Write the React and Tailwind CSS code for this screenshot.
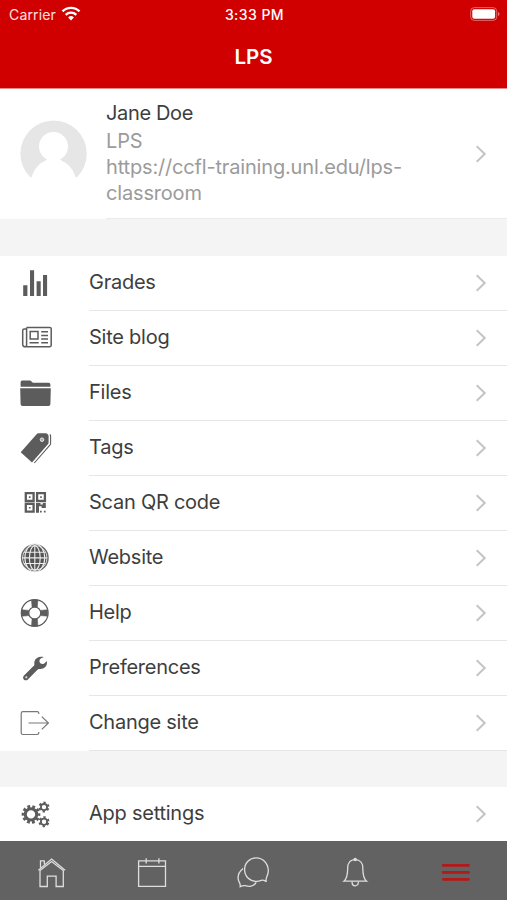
const ICON = "size-10 shrink-0";

function GradesIcon() {
  return (
    <svg viewBox="0 0 40 40" className={ICON} fill="currentColor">
      <path d="M8.2 22.3h4.2V33H8.2zM15 7.3h4.1V33H15zM21.6 18.3h4.1V33h-4.1zM28 12h4.1v21H28z" />
    </svg>
  );
}

function BlogIcon() {
  return (
    <svg viewBox="0 0 40 40" className={ICON} fill="none" stroke="currentColor" strokeWidth="1.5">
      <path d="M11.6 9.4h23.2a1.4 1.4 0 0 1 1.4 1.4v16.4a1.6 1.6 0 0 1-1.6 1.6H10a2.3 2.3 0 0 1-2.3-2.3v-14a1.6 1.6 0 0 1 1.6-1.6h2.2M11.6 9.4v17.3a1.6 1.6 0 0 1-2 1.9" />
      <path d="M15.2 13.6h7.8v7.4h-7.8zM26.2 13.8H33M26.2 17.4H33M26.2 21.1H33M26.2 24.8H33M14.5 24.8h9.2" />
    </svg>
  );
}

function FilesIcon() {
  return (
    <svg viewBox="0 0 40 40" className={ICON} fill="currentColor">
      <path d="M5.6 13.8V9.2q0-1.6 1.6-1.6h7.6c1.8 0 1.6 2.2 3.4 2.2h15.4q1.8 0 1.8 1.8v2.2z" />
      <path d="M5.2 15.2h30.6l-.4 15.8q0 1.9-1.9 1.9h-26q-1.9 0-1.9-1.9z" />
    </svg>
  );
}

function TagsIcon() {
  return (
    <svg viewBox="0 0 40 40" className={ICON} fill="currentColor">
      <path d="M5.7 24.2 21.6 6.2q.8-.9 2-.9h7.2q1.1 0 1.7.8l.7.9q.4.6.4 1.3v6.2q0 .8-.5 1.400L17 34.600z" />
      <path d="M34.800 6.500q.8.500.8 1.500v7.600q0 .7-.5 1.300L19.300 35" fill="none" stroke="currentColor" strokeWidth="1.1" />
      <circle cx="27" cy="11.7" r="1.8" fill="#aaa" stroke="#eee" strokeWidth=".9" />
    </svg>
  );
}

function QrIcon() {
  return (
    <svg viewBox="0 0 40 40" className={ICON} fill="currentColor">
      <path
        d="M10.8 10.2h7.8V18h-7.8zM22.1 10.2h7.8V18h-7.8zM10.8 20.8h7.8v7.8h-7.8z"
        fill="none"
        stroke="currentColor"
        strokeWidth="2.3"
      />
      <path d="M13.900 13.300h1.600v1.600h-1.600zM25.200 13.300h1.600v1.600h-1.600zM13.900 23.900h1.600v1.600h-1.600z" />
      <path d="M21 19.9h4.500v1.500h2.300v-1.500h3v5h-4.200v-1.600h-2.600v6.400h-3zM25 27.800h1.700v1.700H25zM28.900 27.800h1.700v1.700h-1.700z" />
    </svg>
  );
}

function GlobeIcon() {
  return (
    <svg viewBox="0 0 40 40" className={ICON} fill="none">
      <circle cx="19.8" cy="19.9" r="13.2" stroke="#686868" strokeWidth="1.5" />
      <circle cx="19.8" cy="19.9" r="11.800" fill="#555" />
      <g stroke="#ededed" strokeWidth="1.1">
        <path d="M19.8 7.500v24.800M7.400 19.900h24.800M9 14.300h21.600M9 25.500h21.600" />
        <ellipse cx="19.8" cy="19.9" rx="5.4" ry="12.2" />
        <ellipse cx="19.8" cy="19.9" rx="9.9" ry="14" />
      </g>
    </svg>
  );
}

function HelpIcon() {
  return (
    <svg viewBox="0 0 40 40" className={ICON} fill="none" stroke="#5c5c5c">
      <path
        d="M16.500 7h6.400l-.6 7.200h-5.200zM16.500 33h6.400l-.6-7.200h-5.200zM6.700 16.800v6.400l7.200-.6v-5.200zM32.700 16.800v6.400l-7.200-.6v-5.200z"
        fill="#5c5c5c"
        strokeWidth=".6"
      />
      <circle cx="19.7" cy="20" r="13.4" strokeWidth="1.2" />
      <circle cx="19.7" cy="20" r="6" strokeWidth="1.1" />
    </svg>
  );
}

function WrenchIcon() {
  return (
    <svg viewBox="0 0 40 40" className={ICON}>
      <path
        d="M28.8 9.1c-3.6-1.3-8.2.2-9.300 4.100-.4 1.500-.1 2.400-.1 3.300 0 .8-.5 1.300-1.100 1.800l-9.300 9.200c-1.200 1.200-1.200 2.900-.2 4 1.100 1.100 2.900 1.200 4.100 0l9.300-9.500c.7-.7 1.200-1 2.100-1 1.100 0 2.200.2 3.600-.4 3.200-1.300 4.600-4.600 3.900-7.600-1.100 1.300-2.300 2.500-3.500 2.900-1.800.5-3.900-.9-3.900-3 0-1.900 2.300-2.700 4.400-3.800z"
        fill="currentColor"
      />
      <circle cx="11.3" cy="29.3" r="1.1" fill="#ddd" />
    </svg>
  );
}

function ExitIcon() {
  return (
    <svg viewBox="0 0 40 40" className={ICON} fill="none" stroke="#777" strokeWidth="1.2">
      <path d="M23.8 11v-.7q0-1.700-1.700-1.700H8q-1.800 0-1.800 1.800v19.300q0 1.800 1.800 1.800h14.100q1.700 0 1.700-1.700V29" />
      <path d="M13.5 20h19.700M26.800 13.600l6.600 6.400-6.600 6.400" />
    </svg>
  );
}

function GearsIcon() {
  return (
    <svg viewBox="0 0 40 40" className={ICON} fill="none" stroke="currentColor">
      <circle cx="16" cy="20.4" r="5.7" strokeWidth="3" />
      <circle cx="16" cy="20.4" r="7.9" strokeWidth="2.9" strokeDasharray="2.8 2.164" strokeDashoffset="1.4" />
      <circle cx="29" cy="13.1" r="3.1" strokeWidth="1.8" />
      <circle cx="29" cy="13.1" r="4.5" strokeWidth="2" strokeDasharray="2.3 2.412" strokeDashoffset="3.5" />
      <circle cx="29" cy="27.7" r="3.1" strokeWidth="1.8" />
      <circle cx="29" cy="27.7" r="4.5" strokeWidth="2" strokeDasharray="2.3 2.412" strokeDashoffset="3.5" />
    </svg>
  );
}

function Chevron() {
  return (
    <svg viewBox="0 0 12 20" className="h-5 w-3 shrink-0" fill="none" stroke="#c4c4c4" strokeWidth="2">
      <path d="M1.7 2.3 9.7 10l-8 7.7" />
    </svg>
  );
}

function WifiIcon() {
  return (
    <svg viewBox="0 0 20 16" className="ml-[5px] h-4 w-5" fill="none" stroke="#fff" strokeWidth="2.4">
      <path d="M1.5 5.4a12 12 0 0 1 17 0M4.7 8.8a7.6 7.6 0 0 1 10.6 0" />
      <path d="M10 14.4 7.1 11.5a4.2 4.2 0 0 1 5.800 0z" fill="#fff" stroke="none" />
    </svg>
  );
}

function BatteryIcon() {
  return (
    <svg viewBox="0 0 30 14" className="h-3.5 w-[30px]">
      <rect x=".7" y=".6" width="26" height="12.8" rx="3.6" fill="none" stroke="#fff" strokeOpacity=".4" />
      <rect x="2.3" y="2.2" width="22.8" height="9.6" rx="2" fill="#fff" />
      <path d="M28 5v4q1.500-.5 1.500-2T28 5z" fill="#fff" fillOpacity=".5" />
    </svg>
  );
}

function HomeTab() {
  return (
    <svg viewBox="0 0 40 40" className={ICON} fill="none" stroke="#dedede" strokeWidth="1.3">
      <path d="M9.500 14.600V7.900h3.800v3.300M7.400 17.300 20.600 6.100l13.500 11.200" />
      <path d="M9 17.600v15.900h7.300V23.200h8.800v10.300h7.200V17.600L20.600 8.600z" />
    </svg>
  );
}

function CalendarTab() {
  return (
    <svg viewBox="0 0 40 40" className={ICON} fill="none" stroke="#dedede" strokeWidth="1.3">
      <path d="M6.600 7.800h26.900v25.500H6.600zM6.600 13.400h26.900M14.200 5.200v5.400M26.900 5.200v5.400" />
    </svg>
  );
}

function ChatTab() {
  return (
    <svg viewBox="0 0 40 40" className={ICON} fill="none" stroke="#dedede" strokeWidth="1.3">
      <path d="M33.400 28.800c-.7-1.900-.3-3.600.4-5.100 1-2.100 1.700-4 1.500-6.600-.5-7.200-5.800-12.200-12-12.200-6.600 0-11.700 5-11.700 11.600 0 6.900 5.100 11.900 11.900 11.900 2 0 3.300-.4 4.700-1 2-.8 3.700-.1 5.200 1.400z" />
      <path d="M10.100 15.400c-3.700 3-5.900 7.300-4.600 12 .7 2.400 2.100 3 1.700 6.300 1.700-.9 3.300-1.500 5-1 4.200 1.200 8.800.3 11-3.300" />
    </svg>
  );
}

function BellTab() {
  return (
    <svg viewBox="0 0 40 40" className={ICON} fill="none" stroke="#dedede" strokeWidth="1.3">
      <path d="M20.200 6.700c-5.300 0-7.500 4-7.500 8.400 0 6.700-.6 10.600-3.800 13.100h22.700c-3.300-2.500-3.800-6.400-3.800-13.100 0-4.400-2.300-8.400-7.600-8.400z" />
      <path d="M17.100 28.500v1.200a3.100 3.100 0 0 0 6.200 0v-1.200" />
      <circle cx="20.2" cy="6.6" r="1.1" fill="#dedede" />
    </svg>
  );
}

function MenuTab() {
  return (
    <svg viewBox="0 0 40 40" className={ICON} fill="none" stroke="#b51818" strokeWidth="2.7" strokeLinecap="round">
      <path d="M7.200 12.400h25.300M7.200 19.400h25.300M7.200 26.300h25.300" />
    </svg>
  );
}

const ITEMS = [
  { label: "Grades", icon: GradesIcon },
  { label: "Site blog", icon: BlogIcon },
  { label: "Files", icon: FilesIcon },
  { label: "Tags", icon: TagsIcon },
  { label: "Scan QR code", icon: QrIcon },
  { label: "Website", icon: GlobeIcon },
  { label: "Help", icon: HelpIcon },
  { label: "Preferences", icon: WrenchIcon },
  { label: "Change site", icon: ExitIcon },
];

const TABS = [HomeTab, CalendarTab, ChatTab, BellTab, MenuTab];

function MenuRow({ label, icon: Icon }) {
  return (
    <li className="flex h-[55px] pl-[15px] text-[#5c5c5c]">
      <div className="flex h-[54px] items-center">
        <Icon />
      </div>
      <div className="ml-[34px] flex flex-1 items-center justify-between border-b border-[#e6e6e6] pr-5">
        <span className="pb-0.5 text-[20px] leading-6 tracking-[-0.25px] text-[#3e3e3e]">{label}</span>
        <Chevron />
      </div>
    </li>
  );
}

export default function App() {
  return (
    <div className="flex h-[900px] w-[507px] flex-col overflow-hidden bg-[#f4f4f4] font-['Inter',sans-serif]">
      <header className="h-[89px] shrink-0 border-b border-[#e58a8a] bg-[#d00000] text-white">
        <div className="grid h-7 grid-cols-3 items-center pr-[7px] pl-[9px] text-[14px]">
          <div className="flex items-center tracking-[0.15px] text-[#ffe3e3]">
            Carrier
            <WifiIcon />
          </div>
          <span className="text-center font-medium tracking-[0.45px]">3:33 PM</span>
          <div className="flex justify-end">
            <BatteryIcon />
          </div>
        </div>
        <h1 className="pt-[15px] text-center text-[20.5px] leading-7 font-semibold">LPS</h1>
      </header>

      <section className="flex h-[130px] shrink-0 bg-white pl-5">
        <svg viewBox="0 0 68 68" className="mt-[31px] size-[68px]">
          <path d="M10.2 57.2A33.2 33.2 0 1 1 57 57.2z" fill="#e6e6e6" />
          <circle cx="33.5" cy="26.6" r="14.5" fill="#fff" />
          <path
            d="M11.4 58c2.2-8.4 6.800-14 12.600-16.600 2.600-1.200 3.500-2.400 3.500-4.400h12c0 2 .9 3.200 3.500 4.400C48.800 44 53.600 49.600 55.800 58z"
            fill="#fff"
          />
        </svg>
        <div className="ml-[18px] flex flex-1 items-center justify-between border-b border-[#ebebeb] pr-5">
          <div className="w-[310px] pb-0.5 text-[20px] leading-[26px] tracking-[-0.17px] text-[#9b9b9b]">
            <h2 className="mb-0.5 pt-px leading-[25px] tracking-[-0.35px] text-[#3e3e3e]">Jane Doe</h2>
            <p>LPS</p>
            <p>https://ccfl-training.unl.edu/lps-classroom</p>
          </div>
          <Chevron />
        </div>
      </section>

      <ul className="mt-[37px] shrink-0 bg-white">
        {ITEMS.map((item) => (
          <MenuRow key={item.label} {...item} />
        ))}
      </ul>

      <ul className="mt-9 h-[54px] shrink-0 overflow-hidden bg-white">
        <MenuRow label="App settings" icon={GearsIcon} />
      </ul>

      <nav className="grid h-[59px] shrink-0 grid-cols-5 justify-items-center bg-[#626262] pt-3">
        {TABS.map((Tab, i) => (
          <Tab key={i} />
        ))}
      </nav>
    </div>
  );
}
